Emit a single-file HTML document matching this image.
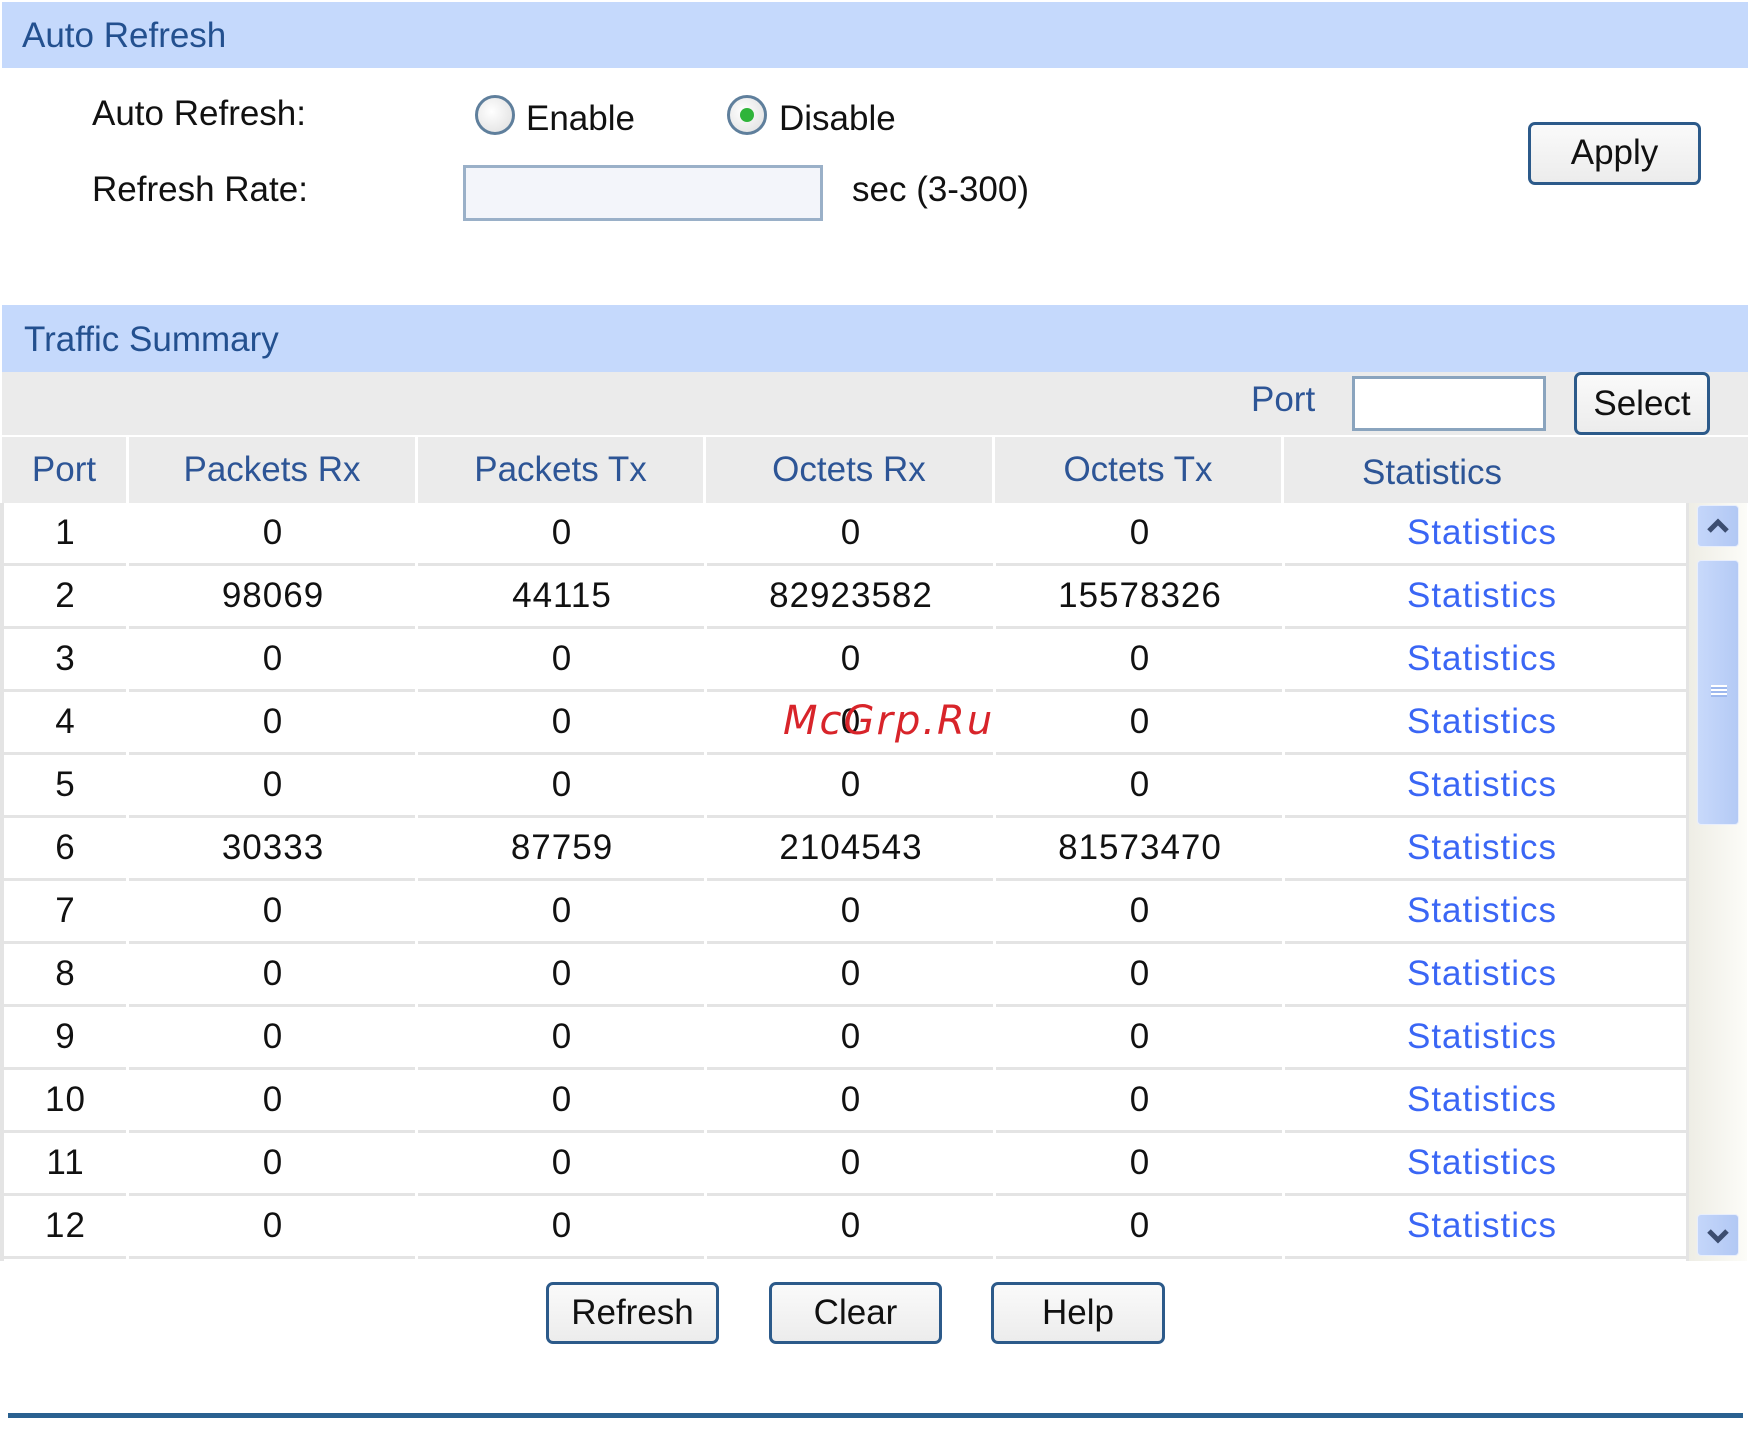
<!DOCTYPE html>
<html><head><meta charset="utf-8"><style>
*{margin:0;padding:0;box-sizing:border-box}
body{width:1750px;height:1444px;background:#fff;position:relative;overflow:hidden;font-family:"Liberation Sans",Arial,sans-serif;font-size:35px;color:#111}
.a{position:absolute;white-space:nowrap}
.band{position:absolute;left:2px;width:1746px;background:#c5d9fc;color:#23508f}
.btn{position:absolute;border:3px solid #2c5a8a;border-radius:7px;background:linear-gradient(#fafafa,#ececec);text-align:center;color:#111}
.radio{position:absolute;width:40px;height:40px;border-radius:50%;border:3px solid #5f7f9c;background:radial-gradient(circle at 40% 40%,#fff,#ddd)}
.hd{position:absolute;top:437px;height:66px;background:#ebebeb;color:#2d5596;text-align:center;line-height:66px}
.row{position:absolute;left:4px;width:1682px;height:63px;border-bottom:3px solid #e4e4e4}
.row div{position:absolute;top:0;height:60px;line-height:60px;text-align:center;letter-spacing:1px}
.l{color:#3a66f5}
</style></head><body>
<div class="band" style="top:2px;height:66px"><span class="a" style="left:20px;top:14px">Auto Refresh</span></div>
<div class="a" style="left:92px;top:94px">Auto Refresh:</div>
<div class="radio" style="left:475px;top:95px"></div>
<div class="a" style="left:526px;top:99px">Enable</div>
<div class="radio" style="left:727px;top:95px"><div style="position:absolute;left:10px;top:10px;width:14px;height:14px;border-radius:50%;background:#2fb43a"></div></div>
<div class="a" style="left:779px;top:99px">Disable</div>
<div class="a" style="left:92px;top:170px">Refresh Rate:</div>
<div class="a" style="left:463px;top:165px;width:360px;height:56px;border:3px solid #9ab0c8;background:#f3f5fa"></div>
<div class="a" style="left:852px;top:170px">sec (3-300)</div>
<div class="btn" style="left:1528px;top:122px;width:173px;height:63px;line-height:56px">Apply</div>

<div class="band" style="top:305px;height:67px"><span class="a" style="left:22px;top:15px">Traffic Summary</span></div>
<div class="a" style="left:2px;top:372px;width:1746px;height:63px;background:#ebebeb"></div>
<div class="a" style="left:1251px;top:380px;color:#2d5596">Port</div>
<div class="a" style="left:1352px;top:376px;width:194px;height:55px;border:3px solid #8aa4be;background:#fff"></div>
<div class="btn" style="left:1574px;top:372px;width:136px;height:63px;line-height:58px">Select</div>

<div class="a" style="left:2px;top:435px;width:1746px;height:2px;background:#fff"></div>
<div class="hd" style="left:2px;width:124px">Port</div>
<div class="hd" style="left:129px;width:286px">Packets Rx</div>
<div class="hd" style="left:418px;width:285px">Packets Tx</div>
<div class="hd" style="left:706px;width:286px">Octets Rx</div>
<div class="hd" style="left:995px;width:286px">Octets Tx</div>
<div class="hd" style="left:1284px;width:464px;line-height:72px;text-align:left;padding-left:78px">Statistics</div>
<div class="a" style="left:0;top:503px;width:4px;height:758px;background:#e4e4e4"></div>

<div class="row" style="top:503px"><div style="left:0;width:123px">1</div><div style="left:125px;width:288px">0</div><div style="left:414px;width:288px">0</div><div style="left:703px;width:288px">0</div><div style="left:992px;width:288px">0</div><div class="l" style="left:1280px;width:396px">Statistics</div></div>
<div class="row" style="top:566px"><div style="left:0;width:123px">2</div><div style="left:125px;width:288px">98069</div><div style="left:414px;width:288px">44115</div><div style="left:703px;width:288px">82923582</div><div style="left:992px;width:288px">15578326</div><div class="l" style="left:1280px;width:396px">Statistics</div></div>
<div class="row" style="top:629px"><div style="left:0;width:123px">3</div><div style="left:125px;width:288px">0</div><div style="left:414px;width:288px">0</div><div style="left:703px;width:288px">0</div><div style="left:992px;width:288px">0</div><div class="l" style="left:1280px;width:396px">Statistics</div></div>
<div class="row" style="top:692px"><div style="left:0;width:123px">4</div><div style="left:125px;width:288px">0</div><div style="left:414px;width:288px">0</div><div style="left:703px;width:288px">0</div><div style="left:992px;width:288px">0</div><div class="l" style="left:1280px;width:396px">Statistics</div></div>
<div class="row" style="top:755px"><div style="left:0;width:123px">5</div><div style="left:125px;width:288px">0</div><div style="left:414px;width:288px">0</div><div style="left:703px;width:288px">0</div><div style="left:992px;width:288px">0</div><div class="l" style="left:1280px;width:396px">Statistics</div></div>
<div class="row" style="top:818px"><div style="left:0;width:123px">6</div><div style="left:125px;width:288px">30333</div><div style="left:414px;width:288px">87759</div><div style="left:703px;width:288px">2104543</div><div style="left:992px;width:288px">81573470</div><div class="l" style="left:1280px;width:396px">Statistics</div></div>
<div class="row" style="top:881px"><div style="left:0;width:123px">7</div><div style="left:125px;width:288px">0</div><div style="left:414px;width:288px">0</div><div style="left:703px;width:288px">0</div><div style="left:992px;width:288px">0</div><div class="l" style="left:1280px;width:396px">Statistics</div></div>
<div class="row" style="top:944px"><div style="left:0;width:123px">8</div><div style="left:125px;width:288px">0</div><div style="left:414px;width:288px">0</div><div style="left:703px;width:288px">0</div><div style="left:992px;width:288px">0</div><div class="l" style="left:1280px;width:396px">Statistics</div></div>
<div class="row" style="top:1007px"><div style="left:0;width:123px">9</div><div style="left:125px;width:288px">0</div><div style="left:414px;width:288px">0</div><div style="left:703px;width:288px">0</div><div style="left:992px;width:288px">0</div><div class="l" style="left:1280px;width:396px">Statistics</div></div>
<div class="row" style="top:1070px"><div style="left:0;width:123px">10</div><div style="left:125px;width:288px">0</div><div style="left:414px;width:288px">0</div><div style="left:703px;width:288px">0</div><div style="left:992px;width:288px">0</div><div class="l" style="left:1280px;width:396px">Statistics</div></div>
<div class="row" style="top:1133px"><div style="left:0;width:123px">11</div><div style="left:125px;width:288px">0</div><div style="left:414px;width:288px">0</div><div style="left:703px;width:288px">0</div><div style="left:992px;width:288px">0</div><div class="l" style="left:1280px;width:396px">Statistics</div></div>
<div class="row" style="top:1196px"><div style="left:0;width:123px">12</div><div style="left:125px;width:288px">0</div><div style="left:414px;width:288px">0</div><div style="left:703px;width:288px">0</div><div style="left:992px;width:288px">0</div><div class="l" style="left:1280px;width:396px">Statistics</div></div>
<div class="a" style="left:126px;top:503px;width:3px;height:758px;background:#fff"></div>
<div class="a" style="left:415px;top:503px;width:3px;height:758px;background:#fff"></div>
<div class="a" style="left:704px;top:503px;width:3px;height:758px;background:#fff"></div>
<div class="a" style="left:993px;top:503px;width:3px;height:758px;background:#fff"></div>
<div class="a" style="left:1282px;top:503px;width:3px;height:758px;background:#fff"></div>
<div class="a" style="left:1686px;top:503px;width:3px;height:758px;background:#e4e4e4"></div>

<div class="a" style="left:1689px;top:503px;width:58px;height:758px;background:linear-gradient(90deg,#eeede5,#fcfcf8)"></div>
<div class="a" style="left:1697px;top:505px;width:42px;height:42px;border-radius:4px;background:linear-gradient(90deg,#c4d6fa,#b2c8f4);border:1px solid #e8eefc">
<svg width="42" height="42" style="position:absolute;left:-1px;top:-1px"><path d="M12 26 L21 17 L30 26" fill="none" stroke="#3c4d70" stroke-width="5"/></svg></div>
<div class="a" style="left:1697px;top:560px;width:42px;height:265px;border-radius:4px;background:linear-gradient(90deg,#c8d9fb,#b4caf5);border:1px solid #e8eefc">
<div style="position:absolute;left:13px;top:124px;width:16px;height:12px;background:repeating-linear-gradient(#fff 0 2px,#9db8ee 2px 4px)"></div></div>
<div class="a" style="left:1697px;top:1214px;width:42px;height:42px;border-radius:4px;background:linear-gradient(90deg,#c4d6fa,#b2c8f4);border:1px solid #e8eefc">
<svg width="42" height="42" style="position:absolute;left:-1px;top:-1px"><path d="M12 17 L21 26 L30 17" fill="none" stroke="#3c4d70" stroke-width="5"/></svg></div>

<div class="a" style="left:783px;top:698px;font-family:'DejaVu Sans',sans-serif;font-style:italic;font-size:40px;color:#d8242a;letter-spacing:2px">McGrp.Ru</div>

<div class="btn" style="left:546px;top:1282px;width:173px;height:62px;line-height:56px">Refresh</div>
<div class="btn" style="left:769px;top:1282px;width:173px;height:62px;line-height:56px">Clear</div>
<div class="btn" style="left:991px;top:1282px;width:174px;height:62px;line-height:56px">Help</div>
<div class="a" style="left:8px;top:1413px;width:1735px;height:5px;background:#2a6190"></div>
</body></html>
